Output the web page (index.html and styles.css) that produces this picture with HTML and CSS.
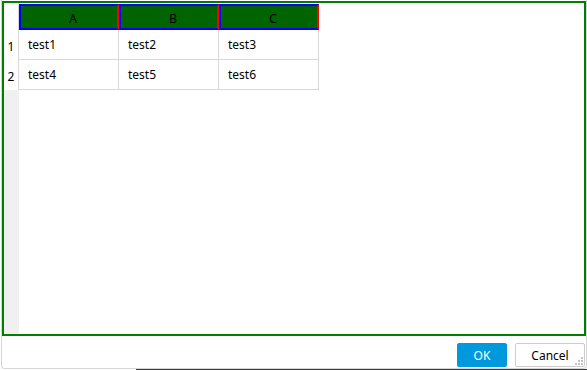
FILE: index.html
```html
<!DOCTYPE html>
<html lang="en">
<head>
  <meta charset="UTF-8" />
  <title>Sheet Editor</title>
  <link rel="stylesheet" href="styles.css">
</head>
<body>
  <div class="dialog">
    <div class="frame">
      <div class="sheet">
        <div class="corner"></div>
        <div class="col-head">A</div>
        <div class="col-head">B</div>
        <div class="col-head">C</div>

        <div class="row-head">1</div>
        <div class="cell">test1</div>
        <div class="cell">test2</div>
        <div class="cell">test3</div>

        <div class="row-head">2</div>
        <div class="cell">test4</div>
        <div class="cell">test5</div>
        <div class="cell">test6</div>

        <div class="row-fill"></div>
      </div>
    </div>
    <div class="footer">
      <button class="btn ok">OK</button>
      <button class="btn cancel">Cancel</button>
      <svg class="grip" width="9" height="9" viewBox="0 0 9 9">
        <rect x="6" y="0" width="2" height="2" fill="#c4c4c4"/>
        <rect x="3" y="3" width="2" height="2" fill="#c4c4c4"/>
        <rect x="6" y="3" width="2" height="2" fill="#c4c4c4"/>
        <rect x="0" y="6" width="2" height="2" fill="#c4c4c4"/>
        <rect x="3" y="6" width="2" height="2" fill="#c4c4c4"/>
        <rect x="6" y="6" width="2" height="2" fill="#c4c4c4"/>
      </svg>
    </div>
  </div>
  <div class="desktop"></div>
</body>
</html>
```

FILE: styles.css
```css
body {
  margin: 0;
  width: 587px;
  height: 370px;
  background: #fff;
  font-family: 'Noto Sans', 'Open Sans', sans-serif;
  font-size: 12px;
  color: #000;
  overflow: hidden;
}
.dialog {
  position: relative;
  margin-left: 1px;
  width: 584px;
  height: 368px;
  border: 1px solid #d6d6d6;
  border-top: none;
  border-radius: 0 0 4px 4px;
  display: flex;
  flex-direction: column;
  background: #fff;
}
.frame {
  margin-top: 1px;
  height: 331px;
  border: 2px solid #008000;
  background: #fff;
}
.sheet {
  display: grid;
  grid-template-columns: 15px 100px 100px 100px;
  grid-template-rows: 27px 30px 30px 1fr;
  height: 100%;
}
.corner {
  border-right: 1px solid #d8d8d8;
}
.col-head {
  margin-top: 1px;
  padding: 2px 0 0 8px;
  background: #006400;
  border: 2px solid #0000ff;
  border-right-color: #ff0000;
  display: flex;
  align-items: center;
  justify-content: center;
  font-size: 12.5px;
}
.row-head {
  border-right: 1px solid #d8d8d8;
  display: flex;
  align-items: center;
  justify-content: center;
  padding-top: 3px;
}
.cell {
  border-right: 1px solid #d8d8d8;
  border-bottom: 1px solid #d8d8d8;
  padding-left: 9px;
  display: flex;
  align-items: center;
}
.row-fill {
  grid-column: 1;
  background: #f0f0f0;
}
.footer {
  flex: 1;
  display: flex;
  justify-content: flex-end;
  align-items: flex-start;
  gap: 8px;
  padding: 7px 1px 0 0;
}
.btn {
  font-family: inherit;
  font-size: 12px;
  height: 24px;
  border-radius: 2px;
  cursor: pointer;
}
.ok {
  width: 50px;
  background: #0099dd;
  color: #fff;
  border: 1px solid #0099dd;
}
.cancel {
  width: 70px;
  background: #fff;
  color: #000;
  border: 1px solid #cdcdcd;
}
.grip {
  position: absolute;
  right: 2px;
  bottom: 2px;
}
.desktop {
  height: 2px;
  background: linear-gradient(to right, #fff 0, #fff 136px, #3a3a3a 136px);
}
```
